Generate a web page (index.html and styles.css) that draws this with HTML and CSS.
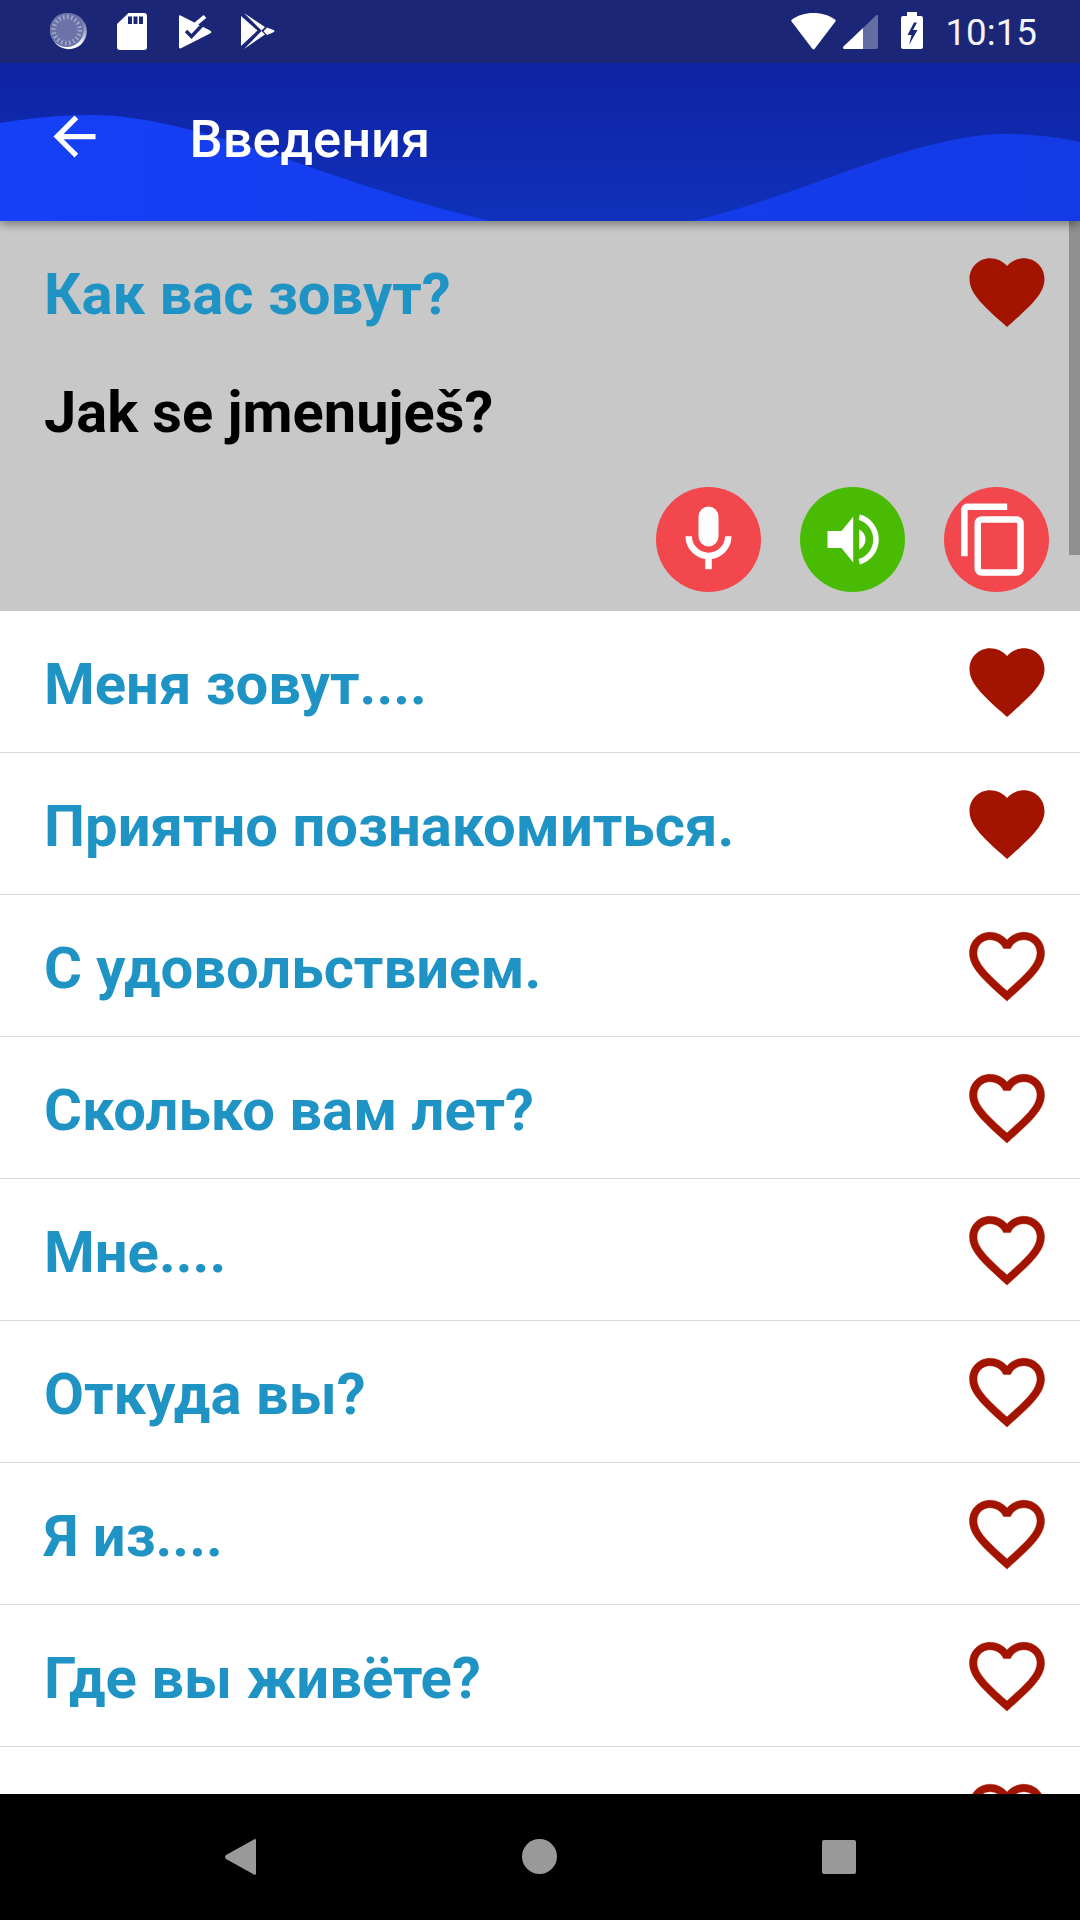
FILE: index.html
```html
<!DOCTYPE html>
<html lang="ru">
<head>
<meta charset="utf-8">
<title>Введения</title>
<link rel="stylesheet" href="styles.css">
</head>
<body>
<svg class="defs" width="0" height="0" aria-hidden="true">
  <defs>
    <path id="heart-full" d="M12 21.35l-1.45-1.32C5.4 15.36 2 12.28 2 8.5 2 5.42 4.42 3 7.5 3c1.74 0 3.41.81 4.5 2.09C13.09 3.81 14.76 3 16.5 3 19.58 3 22 5.42 22 8.5c0 3.78-3.4 6.86-8.55 11.54L12 21.35z"/>
    <path id="heart-line" d="M16.5 3c-1.74 0-3.41.81-4.5 2.09C10.91 3.81 9.24 3 7.5 3 4.42 3 2 5.42 2 8.5c0 3.78 3.4 6.86 8.55 11.54L12 21.35l1.45-1.32C18.6 15.36 22 12.28 22 8.5 22 5.42 19.58 3 16.5 3zm-4.4 15.55l-.1.1-.1-.1C7.14 14.24 4 11.39 4 8.5 4 6.5 5.5 5 7.5 5c1.54 0 3.04.99 3.57 2.36h1.87C13.46 5.99 14.96 5 16.5 5c2 0 3.5 1.500 3.5 3.5 0 2.89-3.14 5.74-7.9 10.05z"/>
  </defs>
</svg>
<div class="phone">
  <header class="status">
    <div class="status-left">
      <svg class="st st-clock" viewBox="0 0 38 37">
        <defs>
          <linearGradient id="moon" x1="1" y1="0" x2="0.5" y2="1"><stop offset="0.2" stop-color="#6b73a8"/><stop offset="0.8" stop-color="#fff"/></linearGradient>
        </defs>
        <circle cx="18.8" cy="18.2" r="18" fill="url(#moon)"/>
        <circle cx="16.7" cy="17" r="17" fill="#6b73a8"/>
        <circle cx="16.7" cy="17" r="13" fill="none" stroke="#fff" stroke-opacity=".4" stroke-width="4.500" stroke-dasharray="1.500 2.580"/>
      </svg>
      <svg class="st st-sd" viewBox="0 0 30 37">
        <path fill="#fff" fill-rule="evenodd" d="M11.500 0H27a3 3 0 0 1 3 3v31a3 3 0 0 1-3 3H3a3 3 0 0 1-3-3V11zM11 3.500v7.500h4V3.500zM16.500 3.500v7.500h4V3.500zM22 3.500v7.500h4V3.500z"/>
      </svg>
      <svg class="st st-check" viewBox="0 0 33 34">
        <path fill="#fff" d="M0 1.500C0 .5.800 0 1.600.6L31.500 15.800c1 .8 1 1.800 0 2.500L2 33.300c-1 .5-2 0-2-1z"/>
        <path fill="none" stroke="#fff" stroke-width="4" d="M12 13L26 1.500"/>
        <path fill="none" stroke="#1b2677" stroke-width="3.500" d="M7 16l5.500 5.500L28 5"/>
      </svg>
      <svg class="st st-play" viewBox="0 0 34 37">
        <path fill="#fff" d="M0 3v30l16.500-15.500zM3 0l21 14-3.500 3.500zM3 36l21-14.500-3.500-3.500zM26 14.500l6.500 2.500c1.300.6 1.300 1.700 0 2.300L26 22l-3.500-3.700z"/>
      </svg>
    </div>
    <div class="status-right">
      <svg class="st st-wifi" viewBox="0 0 45 37"><path fill="#fff" d="M22.500 0C14 0 7 2.300 1 6.500c-.8.600-1 1.300-.4 2L21.300 35.800c.7.800 1.700.8 2.400 0L44.400 8.500c.6-.7.400-1.400-.4-2C38 2.300 31 0 22.500 0z"/></svg>
      <svg class="st st-signal" viewBox="0 0 35 34"><path fill="#fff" fill-opacity=".33" d="M33 .5c1-.9 2-.5 2 .8V32a2 2 0 0 1-2 2H20V13z"/><path fill="#fff" d="M20 13v21H2c-2 0-2.500-1.500-1.300-2.700z"/></svg>
      <svg class="st st-batt" viewBox="0 0 22 37"><path fill="#fff" fill-rule="evenodd" d="M6 0h10v4h4a2 2 0 0 1 2 2v29a2 2 0 0 1-2 2H2a2 2 0 0 1-2-2V6a2 2 0 0 1 2-2h4zM13 10.500L6.500 23h4L8 33l8.500-15H12l4-7.500z"/></svg>
      <span class="time">10:15</span>
    </div>
  </header>
  <div class="toolbar">
    <svg class="wave" viewBox="0 63 1080 158" preserveAspectRatio="none">
      <defs>
        <linearGradient id="sea" x1="0" y1="0" x2="0" y2="1"><stop offset="0" stop-color="#0f22a3"/><stop offset="1" stop-color="#0f31bb"/></linearGradient>
        <linearGradient id="crest" x1="0" y1="0" x2="1" y2="0"><stop offset="0" stop-color="#1640f6"/><stop offset="1" stop-color="#143ae6"/></linearGradient>
      </defs>
      <rect x="0" y="63" width="1080" height="158" fill="url(#sea)"/>
      <path fill="url(#crest)" d="M0 123C30 118 60 115 90 115C150 115 220 136 310 167C370 188 430 207 490 221L692 221C760 205 820 180 885 158C930 144 970 134 1005 134C1030 134 1060 137 1080 142L1080 221L0 221Z"/>
    </svg>
    <svg class="back" viewBox="0 0 24 24"><path fill="#fff" d="M20 11H7.830l5.590-5.590L12 4l-8 8 8 8 1.410-1.410L7.830 13H20v-2z"/></svg>
    <h1 class="title">Введения</h1>
  </div>
  <main class="list">
    <div class="scrollbar"></div>
    <section class="row-open">
      <div class="row-head">
        <span class="phrase">Как вас зовут?</span>
        <svg class="heart" viewBox="0 0 24 24"><use href="#heart-full"/></svg>
      </div>
      <p class="translation">Jak se jmenuješ?</p>
      <div class="actions">
        <span class="fab fab-red">
          <svg viewBox="0 0 105 105">
            <rect x="42.500" y="19.500" width="20" height="40" rx="10" fill="#fff"/>
            <path d="M32.750 49.200a19.750 19.750 0 0 0 39.500 0" fill="none" stroke="#fff" stroke-width="6.500"/>
            <rect x="49.200" y="70" width="6.600" height="12.200" fill="#fff"/>
          </svg>
        </span>
        <span class="fab fab-green">
          <svg viewBox="0 0 105 105">
            <path fill="#fff" d="M27.500 44h14l11.700-14.200v45.700L41.500 61h-14z"/>
            <path fill="#fff" d="M59.200 42.500c3.800 1.800 6.300 5.600 6.300 10s-2.500 8.200-6.300 10z"/>
            <path fill="none" stroke="#fff" stroke-width="5.600" d="M59.200 30.300c9.700 2.400 16.800 11.600 16.800 22.200s-7.100 19.800-16.800 22.200"/>
          </svg>
        </span>
        <span class="fab fab-red">
          <svg viewBox="0 0 105 105">
            <path fill="none" stroke="#fff" stroke-width="6.500" d="M20.400 69.200V22.800a3 3 0 0 1 3-3H63.200"/>
            <rect x="33.750" y="32.400" width="42.800" height="53.200" rx="4" fill="none" stroke="#fff" stroke-width="6.500"/>
          </svg>
        </span>
      </div>
    </section>
    <div class="row"><span class="phrase">Меня зовут....</span><svg class="heart" viewBox="0 0 24 24"><use href="#heart-full"/></svg></div>
    <div class="row"><span class="phrase">Приятно познакомиться.</span><svg class="heart" viewBox="0 0 24 24"><use href="#heart-full"/></svg></div>
    <div class="row"><span class="phrase">С удовольствием.</span><svg class="heart heart-o" viewBox="0 0 24 24"><use href="#heart-line"/></svg></div>
    <div class="row"><span class="phrase">Сколько вам лет?</span><svg class="heart heart-o" viewBox="0 0 24 24"><use href="#heart-line"/></svg></div>
    <div class="row"><span class="phrase">Мне....</span><svg class="heart heart-o" viewBox="0 0 24 24"><use href="#heart-line"/></svg></div>
    <div class="row"><span class="phrase">Откуда вы?</span><svg class="heart heart-o" viewBox="0 0 24 24"><use href="#heart-line"/></svg></div>
    <div class="row"><span class="phrase">Я из....</span><svg class="heart heart-o" viewBox="0 0 24 24"><use href="#heart-line"/></svg></div>
    <div class="row"><span class="phrase">Где вы живёте?</span><svg class="heart heart-o" viewBox="0 0 24 24"><use href="#heart-line"/></svg></div>
    <div class="row"><span class="phrase"></span><svg class="heart heart-o" viewBox="0 0 24 24"><use href="#heart-line"/></svg></div>
  </main>
  <nav class="navbar">
    <svg class="nav-back" viewBox="0 0 31 36"><path fill="#999" d="M28.500.8c1-1.200 2.500-.8 2.500.7v33c0 1.500-1.500 1.900-2.500.7L1 20c-1.300-1.200-1.300-2.800 0-4z"/></svg>
    <span class="nav-home"></span>
    <span class="nav-recent"></span>
  </nav>
</div>
</body>
</html>
```

FILE: styles.css
```css
* { box-sizing: border-box; }
html, body { margin: 0; padding: 0; }
body { font-family: Roboto, "Noto Sans", sans-serif; background: #fff; }
.defs { display: block; height: 0; }
.phone { width: 1080px; height: 1920px; display: flex; flex-direction: column; overflow: hidden; }

.status { height: 63px; flex: none; background: #1b2677; display: flex; justify-content: space-between; align-items: flex-start; padding: 12px 43px 0 50px; position: relative; z-index: 3; }
.status-left, .status-right { display: flex; align-items: flex-start; }
.st { display: block; flex: none; }
.st-clock { width: 38px; height: 37px; margin-top: 1px; }
.st-sd { width: 30px; height: 37px; margin: 1px 0 0 29px; }
.st-check { width: 33px; height: 34px; margin: 3px 0 0 32px; }
.st-play { width: 34px; height: 37px; margin: 1px 0 0 29px; }
.st-wifi { width: 45px; height: 37px; margin-top: 1px; }
.st-signal { width: 35px; height: 34px; margin: 3px 0 0 7px; }
.st-batt { width: 22px; height: 37px; margin-left: 23px; }
.time { color: #fff; font-size: 36.75px; line-height: 42px; margin-left: 22px; opacity: .95; }

.toolbar { height: 158px; flex: none; position: relative; display: flex; align-items: center; padding: 0 0 11px 42.5px; box-shadow: 0 4px 8px rgba(0,0,0,.35); z-index: 2; }
.wave { position: absolute; inset: 0; width: 100%; height: 100%; display: block; }
.back { width: 63px; height: 63px; position: relative; flex: none; }
.title { position: relative; margin: 5px 0 0 84px; color: #fff; font-size: 52.5px; font-weight: 500; line-height: 60px; }

.list { flex: 1; min-height: 0; overflow: hidden; position: relative; }
.scrollbar { position: absolute; right: 0; top: 0; width: 11px; height: 334px; background: rgba(0,0,0,.28); z-index: 1; }
.row { height: 142px; display: flex; align-items: center; justify-content: space-between; padding: 1px 28.5px 0 44px; border-bottom: 1px solid #d9d9d9; }
.row-open { height: 390px; background: #c8c8c8; padding: 0 31px 0 44px; }
.row-head { height: 142px; display: flex; align-items: center; justify-content: space-between; margin-right: -2.5px; }
.phrase { font-size: 58px; font-weight: 700; color: #2093c5; line-height: 64px; white-space: nowrap; margin-top: 3px; }
.heart { width: 90px; height: 90px; fill: #a31400; flex: none; }
.heart-o { stroke: #a31400; stroke-width: .12; }
.translation { margin: 17px 0 0; font-size: 57.75px; font-weight: 700; color: #000; line-height: 64px; }
.actions { display: flex; justify-content: flex-end; gap: 39px; margin-top: 43px; }
.fab { width: 105px; height: 105px; border-radius: 50%; display: block; flex: none; }
.fab svg { display: block; width: 105px; height: 105px; }
.fab-red { background: #f2474c; }
.fab-green { background: #49bb02; }

.navbar { height: 126px; flex: none; background: #000; display: flex; align-items: center; padding-left: 225px; position: relative; z-index: 3; }
.nav-back { width: 31px; height: 36px; flex: none; margin-top: -1px; }
.nav-home { width: 35px; height: 35px; border-radius: 50%; background: #999; margin: -1px 0 0 266px; flex: none; }
.nav-recent { width: 34px; height: 34px; border-radius: 2px; background: #999; margin-left: 265px; flex: none; }
```
